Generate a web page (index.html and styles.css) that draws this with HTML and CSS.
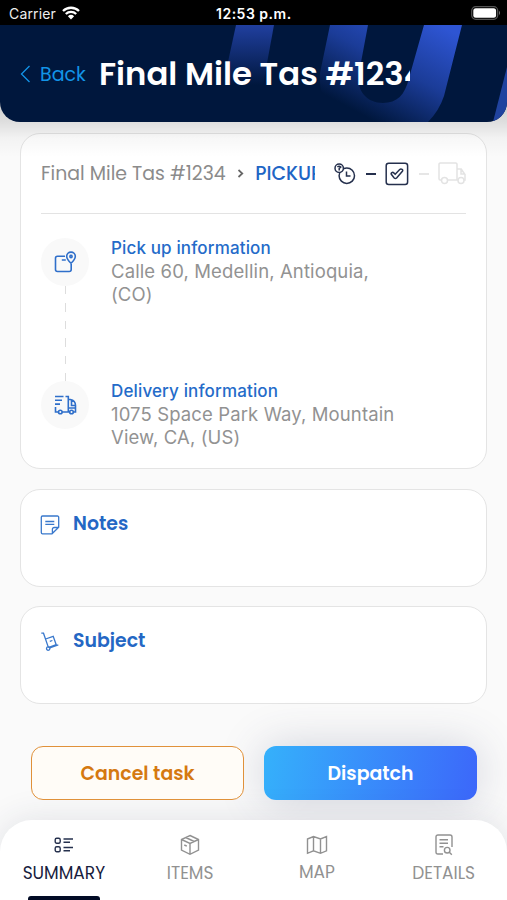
FILE: index.html
```html
<!DOCTYPE html>
<html lang="en">

<head>
    <meta charset="UTF-8">
    <meta name="viewport" content="width=device-width, initial-scale=1.0">
    <title>Final Mile Task</title>
    <link rel="stylesheet" href="styles.css">
</head>

<body>
    <div class="status">
        <span class="carrier">Carrier</span>
        <svg class="wifi" width="18" height="14" viewBox="0 0 18 14">
            <path d="M1 5a11.5 11.5 0 0 1 16 0M3.8 8a7.5 7.5 0 0 1 10.4 0" fill="none" stroke="#fff" stroke-width="2.3" />
            <path d="M9 13.5L5.9 10.3a4.5 4.5 0 0 1 6.2 0z" fill="#fff" />
        </svg>
        <span class="clock">12:53 p.m.</span>
        <svg class="battery" width="30" height="14" viewBox="0 0 30 14">
            <rect x=".7" y=".7" width="26" height="12.6" rx="4" fill="none" stroke="#555" stroke-width="1.2" />
            <rect x="2.3" y="2.2" width="22.8" height="9.6" rx="2.5" fill="#fff" />
            <path d="M28 4.8q2 2.2 0 4.4z" fill="#777" />
        </svg>
    </div>

    <header>
        <svg class="pattern" width="507" height="97" viewBox="0 0 507 97">
            <defs>
                <linearGradient id="stripe" x1="0" y1="0" x2="0" y2="1">
                    <stop offset="0" stop-color="#203f9f" />
                    <stop offset="1" stop-color="#00173d" />
                </linearGradient>
                <linearGradient id="curve" gradientUnits="userSpaceOnUse" x1="440" y1="0" x2="385" y2="102">
                    <stop offset="0" stop-color="#2e55d3" />
                    <stop offset=".5" stop-color="#1b3c98" />
                    <stop offset="1" stop-color="#00173d" />
                </linearGradient>
            </defs>
            <path d="M236 0H274L263 60H223z" fill="url(#stripe)" />
            <path d="M330 0H368L359 48C356 66 367 78 383 78C397 78 405 70 409 53L424 0H462L444 71Q439 86 428 97H352C330 91 318 72 320 48z" fill="url(#curve)" />
            <path d="M507 42V97H493z" fill="#20439f" />
        </svg>
        <a class="back" href="#">
            <svg width="11" height="18" viewBox="0 0 11 18"><path d="M9.5 1L1.5 9l8 8" /></svg>
            <span>Back</span>
        </a>
        <h1>Final Mile Tas #1234</h1>
    </header>

    <main>
        <section class="card task">
            <div class="crumbs">
                <span class="crumb">Final Mile Tas #1234</span>
                <svg class="arrow" width="7" height="9" viewBox="0 0 7 9"><path d="M1.5 1l3.800 3.500L1.500 8" /></svg>
                <span class="stage">PICKUP</span>
                <div class="steps">
                    <svg width="22" height="22" viewBox="0 0 22 22">
                        <circle cx="12.8" cy="12.7" r="7.7" />
                        <circle cx="5.2" cy="5.2" r="4.2" fill="#fff" />
                        <path d="M12.5 8.5v4.4h4M3.400 4q1.800-1.500 3.400 0L5.200 5.500v2" />
                    </svg>
                    <i class="dash"></i>
                    <svg width="24" height="24" viewBox="0 0 24 24">
                        <rect x="1.2" y="1.2" width="21.4" height="21.4" rx="2.5" />
                        <path d="M6.3 12.3c-.8-1.4 1.4-2.6 2.5-1.4l1.4 1.3 4.5-4.7c1.5-1.4 3.9.2 2.7 1.8L11.6 16q-1.2 1.1-2.4 0z" />
                    </svg>
                    <i class="dash faint"></i>
                    <svg class="faint" width="28" height="23" viewBox="0 0 28 23">
                        <path d="M3.5 18H2.3A1.3 1.3 0 0 1 1 16.7V2.3A1.3 1.3 0 0 1 2.3 1h15.4A1.3 1.3 0 0 1 19 2.3V18H9.5M19 7h4.2L27 12.5V18h-1M19 18h1M23 7v5h4" />
                        <circle cx="6.5" cy="18.5" r="3" />
                        <circle cx="23" cy="18.5" r="3" />
                    </svg>
                </div>
            </div>

            <div class="stop pickup">
                <div class="bubble">
                    <svg width="23" height="22" viewBox="0 0 23 22">
                        <path d="M11 5.2H3.5a2 2 0 0 0-2 2v11.3a2 2 0 0 0 2 2h11.7a2 2 0 0 0 2-2V13M7.8 9h4" />
                        <path d="M17 12.3c-3-3-4.3-4.8-4.3-6.9a4.3 4.3 0 0 1 8.6 0c0 2.1-1.3 3.9-4.3 6.9z" />
                        <circle cx="17" cy="5.5" r="1.1" />
                    </svg>
                </div>
                <div class="place">
                    <h3>Pick up information</h3>
                    <p>Calle 60, Medellin, Antioquia,<br>(CO)</p>
                </div>
            </div>
            <div class="stop delivery">
                <div class="bubble">
                    <svg width="23" height="20" viewBox="0 0 23 20">
                        <path d="M1 1.500h8.500M1 5.300h7M1 9.100h5M1.500 12v5h3M8 17h7.500M11.500 1.500h2.800V17M14.300 4.500h2q5.200 1 5.200 6V17h-2M17.500 5v5.500h4M14.300 13h7" />
                        <circle cx="6.3" cy="17" r="1.8" />
                        <circle cx="17.5" cy="17" r="1.8" />
                    </svg>
                </div>
                <div class="place">
                    <h3>Delivery information</h3>
                    <p>1075 Space Park Way, Mountain<br>View, CA, (US)</p>
                </div>
            </div>
        </section>

        <section class="card small">
            <svg width="20" height="20" viewBox="0 0 20 20">
                <path d="M2.5 1h15A1.2 1.2 0 0 1 18.7 2.2v10L12 18.8H2.5A1.2 1.2 0 0 1 1.3 17.6V2.2A1.2 1.2 0 0 1 2.5 1zM18.5 12.5h-4.3a1.8 1.8 0 0 0-1.8 1.8v4.2M5.3 6.5h9M5.3 9.3h9" />
            </svg>
            <h2>Notes</h2>
        </section>

        <section class="card small subject">
            <svg width="20" height="20" viewBox="0 0 20 20">
                <path d="M1.3 1.2h2.2l4.7 13.7M9.8 16l8.5-3.1M5.6 7L13.2 4.4l3 8.3-8 2.8M9.8 9.4l2.6-.9" />
                <circle cx="8.2" cy="16.6" r="1.7" />
            </svg>
            <h2>Subject</h2>
        </section>

        <div class="actions">
            <button class="cancel"><span>Cancel task</span></button>
            <button class="dispatch"><span>Dispatch</span></button>
        </div>
    </main>

    <nav>
        <a class="active" href="#">
            <svg width="20" height="22" viewBox="0 0 20 22">
                <rect x="1.2" y="4.2" width="5" height="5" rx="1.5" />
                <rect x="1.2" y="12.7" width="5" height="5" rx="1.5" />
                <path d="M9.5 5h9.500M9.500 8.200h6.500M9.500 13.500h9.500M9.500 16.700h6.500" />
            </svg>
            <span>SUMMARY</span>
        </a>
        <a class="items" href="#">
            <svg width="20" height="22" viewBox="0 0 20 22">
                <path d="M10 1.500l8.500 4v10.500L10 20.300 1.500 16V5.500zM1.500 5.500L10 9.500l8.500-4M10 9.500v10.800M5.700 3.500l8.500 4M4.300 11l2.500 1.200" />
            </svg>
            <span>ITEMS</span>
        </a>
        <a class="map" href="#">
            <svg width="22" height="22" viewBox="0 0 22 22">
                <path d="M1.500 5l6-2.500 7 2.500 6-2.500v14.300l-6 2.500-7-2.500-6 2.500zM7.500 2.500v14.300M14.500 5v14.300" />
            </svg>
            <span>MAP</span>
        </a>
        <a class="details" href="#">
            <svg width="20" height="22" viewBox="0 0 20 22">
                <path d="M9 20H4q-2 0-2-2V3q0-2 2-2h12q2 0 2 2v10M5.500 5.700h8.500M5.500 9.200h8.500M5.500 12.700h4" />
                <circle cx="13.2" cy="16.2" r="2.8" />
                <path d="M15.300 18.300l2.500 2.500" />
            </svg>
            <span>DETAILS</span>
        </a>
    </nav>
</body>

</html>
```
FILE: styles.css
```css
* {
    box-sizing: border-box;
}

body {
    margin: 0;
    width: 507px;
    height: 900px;
    overflow: hidden;
    display: flex;
    flex-direction: column;
    background-color: #fafafa;
    font-family: Poppins, Inter, sans-serif;
}

h1,
h2,
h3,
p {
    margin: 0;
}

a {
    text-decoration: none;
}

svg {
    flex: none;
    fill: none;
}

span,
h1 {
    white-space: nowrap;
}

.status {
    display: flex;
    flex: none;
    align-items: center;
    height: 25px;
    padding: 1px 6px 0 9px;
    background-color: #000;
    color: #eee;
    font-family: Inter, sans-serif;
    font-size: 14px;
}

.carrier {
    width: 47px;
    letter-spacing: 0.15px;
}

.wifi {
    margin-left: 6px;
}

.clock {
    margin-left: 136px;
    color: #fff;
    font-weight: 600;
    letter-spacing: 0.5px;
}

.battery {
    margin-left: auto;
}

header {
    position: relative;
    z-index: 1;
    flex: none;
    display: flex;
    align-items: center;
    height: 97px;
    padding-left: 20px;
    overflow: hidden;
    border-radius: 0 0 20px 20px;
    background-color: #00173d;
}

/* shadow the header drops on the first card */
main::before {
    content: "";
    position: absolute;
    top: 0;
    left: 0;
    right: 0;
    height: 55px;
    background: linear-gradient(rgba(0, 0, 0, 0.18), rgba(0, 0, 0, 0.11) 20px, rgba(0, 0, 0, 0.03) 36px, rgba(0, 0, 0, 0));
    pointer-events: none;
}

.pattern {
    position: absolute;
    top: 0;
    left: 0;
}

.back {
    position: relative;
    display: flex;
    align-items: center;
    gap: 9px;
    width: 79px;
    color: #1294e8;
    font-size: 19px;
}

.back svg {
    stroke: #1294e8;
    stroke-width: 1.3;
}

.back span {
    padding-top: 1px;
}

h1 {
    position: relative;
    width: 311px;
    overflow: hidden;
    color: #fff;
    font-size: 32.3px;
    font-weight: 600;
    line-height: 40px;
}

main {
    position: relative;
    flex: 1;
    margin-top: -20px;
    padding: 31px 20px 0;
}

.card {
    border: 1px solid #e4e4e4;
    border-radius: 20px;
    background-color: #fff;
}

.task {
    height: 336px;
    padding: 0 20px;
    background: repeating-linear-gradient(#ddd 0 8px, transparent 8px 17.5px) 44px 152px / 1px 96px no-repeat #fff;
}

.crumbs {
    display: flex;
    align-items: center;
    height: 80px;
    border-bottom: 1px solid #e3e3e3;
    color: #8b8b8b;
    font-size: 18.9px;
}

.crumb {
    width: 197px;
}

.arrow {
    stroke: #666;
    stroke-width: 1.7;
}

.stage {
    width: 60px;
    margin-left: 11px;
    overflow: hidden;
    color: #1e65c5;
    font-weight: 500;
}

.steps {
    display: flex;
    align-items: center;
    margin-left: 19px;
    stroke: #25304d;
    stroke-width: 1.5;
}

.dash {
    width: 10px;
    height: 2px;
    margin: 0 9px 0 10px;
    background-color: #25304d;
}

.dash.faint {
    background-color: #e6e6e6;
}

.steps svg.faint {
    stroke: #e3e3e3;
}

.stop {
    display: flex;
    align-items: flex-start;
    padding-top: 24px;
}

.pickup {
    height: 143px;
}

.bubble {
    display: flex;
    align-items: center;
    justify-content: center;
    width: 48px;
    height: 48px;
    border-radius: 50%;
    background-color: #f9f9f9;
    stroke: #2f6fca;
    stroke-width: 1.6;
}

.place {
    margin: -1px 0 0 22px;
    color: #929292;
    font-family: Inter, sans-serif;
    font-size: 18.5px;
    letter-spacing: 0.12px;
    line-height: 23px;
}

h3 {
    color: #246bc9;
    font-size: 17px;
    font-weight: 500;
    letter-spacing: 0.14px;
    line-height: 23px;
}

.small {
    display: flex;
    align-items: flex-start;
    gap: 13px;
    height: 98px;
    margin-top: 20px;
    padding: 22px 19px;
    stroke: #3978cc;
    stroke-width: 1.3;
}

.subject {
    margin-top: 19px;
}

.small svg {
    margin-top: 3px;
}

h2 {
    color: #2467c4;
    font-size: 18.9px;
    font-weight: 600;
    line-height: 24px;
}

.actions {
    display: flex;
    gap: 20px;
    margin: 42px 10px 0 11px;
}

button {
    width: 213px;
    height: 54px;
    padding: 0;
    border: 1.5px solid #e0913a;
    border-radius: 12px;
    background-color: #fffcf7;
    color: #d57910;
    font-family: inherit;
    font-size: 18.9px;
    font-weight: 600;
}

.cancel {
    position: relative;
    z-index: 1;
}

.dispatch {
    border: 0;
    background: linear-gradient(100deg, #35b1fb, #3c67fa);
    box-shadow: 0 0 45px rgba(60, 70, 110, 0.22);
    color: #fff;
}

nav {
    position: relative;
    flex: none;
    display: grid;
    grid-template-columns: repeat(4, 1fr);
    height: 80px;
    border-radius: 32px 32px 0 0;
    background-color: #fff;
    box-shadow: 0 0 35px rgba(40, 50, 80, 0.12);
}

nav a {
    display: flex;
    flex-direction: column;
    align-items: center;
    padding-top: 14px;
    color: #919191;
    stroke: #919191;
    stroke-width: 1.4;
    font-size: 17px;
}

nav span {
    line-height: 22px;
    margin-top: 6px;
}

.map span {
    margin-top: 5px;
}

nav .active {
    padding-left: 1px;
    color: #17203d;
    stroke: #25304d;
}

.active::after {
    content: "";
    width: 72px;
    height: 4px;
    margin-top: 12px;
    border-radius: 3px 3px 0 0;
    background-color: #020b25;
}
```
